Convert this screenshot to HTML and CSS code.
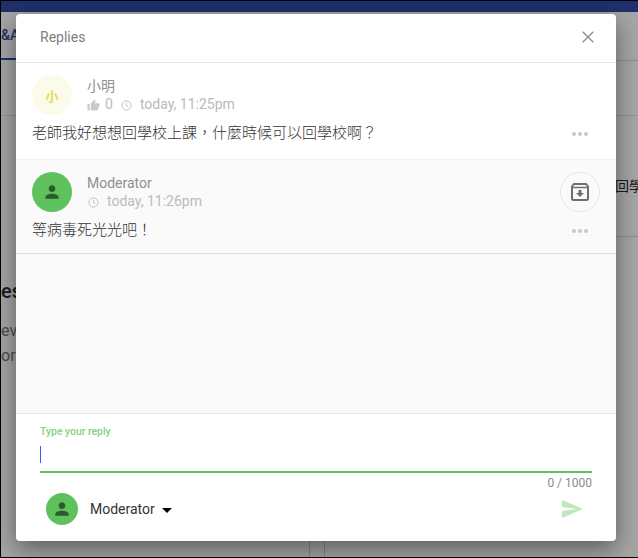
FILE: index.html
```html
<!DOCTYPE html>
<html lang="zh-Hant">
<head>
  <meta charset="UTF-8">
  <title>Replies</title>
  <link rel="stylesheet" href="styles.css">
</head>
<body>
  <div class="page">
    <div class="topbar"></div>
    <div class="behind">
      <span class="behind-tab">&amp;A</span>
      <span class="behind-tab-line"></span>
      <span class="behind-rule-a"></span>
      <span class="behind-rule-b"></span>
      <span class="behind-rule-c"></span>
      <span class="behind-rule-d"></span>
      <span class="behind-rule-e"></span>
      <span class="behind-title">es</span>
      <span class="behind-text-a">ev</span>
      <span class="behind-text-b">or</span>
      <span class="behind-text-c">回學</span>
    </div>
    <div class="overlay"></div>

    <div class="modal">
      <div class="modal-header">
        <span class="modal-title">Replies</span>
        <svg class="close-icon" viewBox="0 0 12 12" width="12" height="12">
          <path d="M.7.7l10.600 10.600M11.300.7L.7 11.300" fill="none" stroke="#8f8f8f" stroke-width="1.400"/>
        </svg>
      </div>

      <div class="reply">
        <div class="reply-top">
          <div class="avatar avatar-letter">小</div>
          <div class="reply-info">
            <div class="reply-name">小明</div>
            <div class="reply-meta">
              <svg class="thumb-icon" viewBox="0 0 24 24" width="13" height="13">
                <path d="M1 21h4V9H1v12zm22-11c0-1.100-.9-2-2-2h-6.310l.95-4.570.03-.32c0-.41-.17-.79-.44-1.060L14.170 1 7.590 7.590C7.220 7.950 7 8.450 7 9v10c0 1.100.9 2 2 2h9c.83 0 1.540-.5 1.840-1.220l3.020-7.050c.09-.23.14-.47.14-.73v-2z" fill="#cacaca"/>
              </svg>
              <span class="like-count">0</span>
              <svg class="clock-icon" viewBox="0 0 12 12" width="11" height="11">
                <circle cx="6" cy="6" r="5" fill="none" stroke="#bdbdbd" stroke-width="1"/>
                <path d="M6 3v3.200l2 1.200" fill="none" stroke="#bdbdbd" stroke-width="1"/>
              </svg>
              <span class="reply-time">today, 11:25pm</span>
            </div>
          </div>
        </div>
        <div class="reply-body">
          <span class="reply-text">老師我好想想回學校上課，什麼時候可以回學校啊？</span>
          <span class="dots"><i></i><i></i><i></i></span>
        </div>
      </div>

      <div class="reply reply-mod">
        <div class="reply-top">
          <div class="avatar avatar-mod">
            <svg viewBox="0 0 24 24" width="20" height="20">
              <path d="M12 12c2.210 0 4-1.790 4-4s-1.790-4-4-4-4 1.790-4 4 1.790 4 4 4zm0 2c-2.670 0-8 1.340-8 4v2h16v-2c0-2.660-5.330-4-8-4z" fill="#2b5a2c"/>
            </svg>
          </div>
          <div class="reply-info">
            <div class="reply-name">Moderator</div>
            <div class="reply-meta">
              <svg class="clock-icon clock-first" viewBox="0 0 12 12" width="11" height="11">
                <circle cx="6" cy="6" r="5" fill="none" stroke="#bdbdbd" stroke-width="1"/>
                <path d="M6 3v3.200l2 1.200" fill="none" stroke="#bdbdbd" stroke-width="1"/>
              </svg>
              <span class="reply-time">today, 11:26pm</span>
            </div>
          </div>
          <div class="archive-btn">
            <svg viewBox="0 0 18 18" width="18" height="18">
              <path d="M3 1h12l2 2.500V15.500A1.500 1.500 0 0 1 15.500 17h-13A1.500 1.500 0 0 1 1 15.500V3.500z" fill="none" stroke="#6e6e6e" stroke-width="2"/>
              <path d="M1.500 4.500h15" stroke="#6e6e6e" stroke-width="1.500"/>
              <path d="M7.500 7h3v3H13l-4 4-4-4h2.500z" fill="#6e6e6e"/>
            </svg>
          </div>
        </div>
        <div class="reply-body">
          <span class="reply-text">等病毒死光光吧！</span>
          <span class="dots"><i></i><i></i><i></i></span>
        </div>
      </div>

      <div class="reply-space"></div>

      <div class="composer">
        <label class="input-label">Type your reply</label>
        <div class="input-box"><span class="caret"></span></div>
        <div class="counter">0 / 1000</div>
        <div class="composer-bottom">
          <div class="avatar avatar-mod avatar-small">
            <svg viewBox="0 0 24 24" width="20" height="20">
              <path d="M12 12c2.210 0 4-1.790 4-4s-1.790-4-4-4-4 1.790-4 4 1.790 4 4 4zm0 2c-2.670 0-8 1.340-8 4v2h16v-2c0-2.660-5.330-4-8-4z" fill="#2b5a2c"/>
            </svg>
          </div>
          <span class="composer-name">Moderator</span>
          <span class="caret-down"></span>
          <svg class="send-icon" viewBox="0 0 24 24" width="24" height="24">
            <path d="M2.010 21L23 12 2.010 3 2 10l15 2-15 2z" fill="#bfe6bd"/>
          </svg>
        </div>
      </div>
    </div>
  </div>
</body>
</html>
```

FILE: styles.css
```css
* {
  box-sizing: border-box;
  margin: 0;
  padding: 0;
}

body {
  font-family: Roboto, "Noto Sans CJK TC", sans-serif;
  background-color: #fff;
}

.page {
  position: relative;
  width: 638px;
  height: 558px;
  overflow: hidden;
  border: solid #000;
  border-width: 1px 0 1px 1px;
}

.topbar {
  height: 11px;
  background-color: #304ca6;
}

.behind {
  position: relative;
  height: 545px;
  color: #2a2a3c;
}

.behind span {
  position: absolute;
  white-space: nowrap;
}

.behind-tab {
  left: 0;
  top: 15px;
  font-size: 14px;
  font-weight: 500;
  color: #304ca6;
}

.behind-tab-line {
  left: 0;
  top: 46px;
  width: 15px;
  height: 2px;
  background-color: #304ca6;
}

.behind-rule-a {
  left: 615px;
  top: 48px;
  width: 22px;
  height: 1px;
  background-color: #d8d8d8;
}

.behind-rule-b {
  left: 0;
  top: 103px;
  width: 637px;
  height: 1px;
  background-color: #e4e4e4;
}

.behind-rule-c {
  left: 308px;
  top: 500px;
  width: 1px;
  height: 45px;
  background-color: #d0d0d0;
}

.behind-rule-d {
  left: 323px;
  top: 500px;
  width: 1px;
  height: 45px;
  background-color: #d0d0d0;
}

.behind-rule-e {
  left: 615px;
  top: 224px;
  width: 22px;
  height: 1px;
  background-color: #d8d8d8;
}

.behind-title {
  left: 0;
  top: 267px;
  font-size: 20px;
  font-weight: 500;
}

.behind-text-a {
  left: 0;
  top: 309px;
  font-size: 16px;
  color: #777;
}

.behind-text-b {
  left: 0;
  top: 334px;
  font-size: 16px;
  color: #777;
}

.behind-text-c {
  left: 614px;
  top: 163px;
  font-size: 14px;
}

.overlay {
  position: absolute;
  inset: 0;
  background-color: rgba(0, 0, 0, 0.35);
}

.modal {
  position: absolute;
  left: 15px;
  top: 13px;
  width: 600px;
  height: 527px;
  display: flex;
  flex-direction: column;
  background-color: #fff;
  border-radius: 4px;
  box-shadow: 0 8px 24px rgba(0, 0, 0, 0.45);
}

.modal-header {
  display: flex;
  align-items: center;
  justify-content: space-between;
  height: 49px;
  padding: 0 22px 2px 24px;
  border-bottom: 1px solid #e6e6e6;
}

.modal-title {
  font-size: 14px;
  color: #808080;
}

.reply {
  height: 96px;
  padding: 12px 16px 0;
  background-color: #fff;
}

.reply-mod {
  height: 95px;
  background-color: #fafafa;
  border-top: 1px solid #f2f2f2;
  border-bottom: 1px solid #e0e0e0;
}

.reply-top {
  display: flex;
  align-items: flex-start;
}

.avatar {
  display: flex;
  align-items: center;
  justify-content: center;
  flex-shrink: 0;
  width: 40px;
  height: 40px;
  border-radius: 50%;
}

.avatar-letter {
  font-size: 13px;
  font-weight: 700;
  color: #e3d95a;
  background-color: #fbfbe9;
}

.avatar-mod {
  background-color: #5fc15c;
}

.avatar-small {
  width: 32px;
  height: 32px;
}

.reply-info {
  flex: 1;
  margin-left: 15px;
}

.reply-name {
  height: 20px;
  font-size: 14px;
  line-height: 22px;
  color: #8f8f8f;
}

.reply-meta {
  display: flex;
  align-items: center;
  height: 18px;
  font-size: 14px;
  color: #bababa;
}

.like-count {
  margin-left: 5px;
}

.clock-icon {
  margin: 2px 0 0 8px;
}

.clock-first {
  margin-left: 1px;
}

.reply-time {
  margin-left: 8px;
}

.thumb-icon {
  margin-top: 2px;
}

.archive-btn {
  display: flex;
  align-items: center;
  justify-content: center;
  width: 40px;
  height: 40px;
  border: 1px solid #e6e6e6;
  border-radius: 50%;
}

.reply-body {
  display: flex;
  align-items: center;
  justify-content: space-between;
  height: 24px;
  margin-top: 4px;
  padding-right: 12px;
}

.reply-text {
  font-size: 15px;
  font-weight: 300;
  color: #333;
}

.dots {
  display: flex;
  gap: 2px;
  margin-top: 6px;
}

.dots i {
  width: 4px;
  height: 4px;
  border-radius: 50%;
  background-color: #c8c8c8;
}

.reply-space {
  flex: 1;
  background-color: #f9f9f9;
}

.composer {
  height: 128px;
  padding: 11px 24px 0;
  border-top: 1px solid #e6e6e6;
}

.input-label {
  display: block;
  height: 14px;
  font-size: 10.400px;
  font-weight: 500;
  line-height: 14px;
  color: #86d283;
}

.input-box {
  height: 34px;
  padding-top: 7px;
  border-bottom: 2px solid #5fc15c;
}

.caret {
  display: block;
  width: 1px;
  height: 17px;
  background-color: #2962ff;
}

.counter {
  margin-top: 3px;
  font-size: 12px;
  line-height: 14px;
  text-align: right;
  color: #8a8a8a;
}

.composer-bottom {
  display: flex;
  align-items: center;
  height: 32px;
  margin-top: 3px;
  padding-left: 6px;
}

.composer-name {
  margin-left: 12px;
  font-size: 14px;
  color: #333;
}

.caret-down {
  width: 0;
  height: 0;
  margin: 2px 0 0 7px;
  border: solid transparent;
  border-width: 5px 5px 0;
  border-top-color: #000;
}

.send-icon {
  margin-left: auto;
  margin-right: 8px;
}
```
